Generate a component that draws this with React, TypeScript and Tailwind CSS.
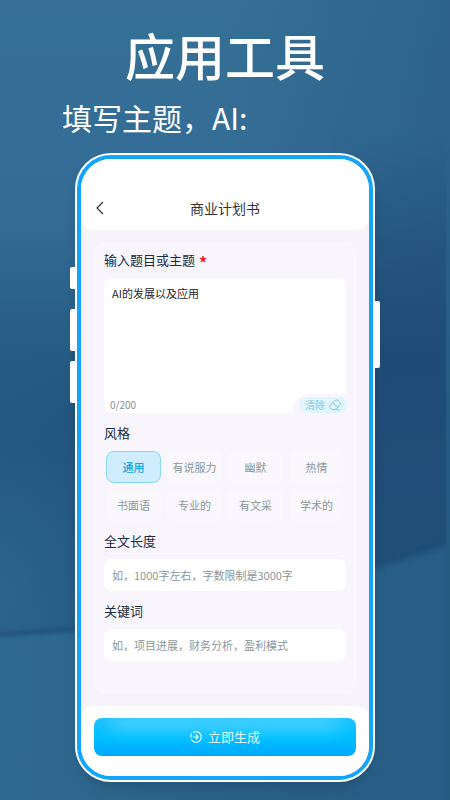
import { useState } from 'react';

const STYLES = ['通用', '有说服力', '幽默', '热情', '书面语', '专业的', '有文采', '学术的'];

const MAX_LENGTH = 200;

const Backdrop = () => (
  <svg
    className="absolute inset-0 h-full w-full"
    viewBox="0 0 450 800"
    preserveAspectRatio="none"
    aria-hidden="true"
  >
    <defs>
      <linearGradient id="wall" x1="0" y1="0" x2="0" y2="1">
        <stop offset="0" stopColor="#357096" />
        <stop offset="0.28" stopColor="#336b95" />
        <stop offset="0.42" stopColor="#285d85" />
        <stop offset="0.56" stopColor="#20517a" />
        <stop offset="0.8" stopColor="#25597f" />
      </linearGradient>
      <linearGradient id="side" x1="0" y1="0" x2="1" y2="0">
        <stop offset="0.5" stopColor="#1f4d76" stopOpacity="0" />
        <stop offset="1" stopColor="#1f4d76" stopOpacity="0.35" />
      </linearGradient>
      <radialGradient id="glow" cx="0" cy="0.74" r="0.32" gradientTransform="scale(1 1)">
        <stop offset="0" stopColor="#2d678e" stopOpacity="0.8" />
        <stop offset="1" stopColor="#2d678e" stopOpacity="0" />
      </radialGradient>
      <linearGradient id="right" x1="0" y1="0" x2="0" y2="1">
        <stop offset="0" stopColor="#1f4c76" stopOpacity="0" />
        <stop offset="0.5" stopColor="#1f4c76" />
        <stop offset="1" stopColor="#1f4f78" />
      </linearGradient>
      <linearGradient id="floor" x1="0" y1="0" x2="1" y2="0">
        <stop offset="0" stopColor="#2f6a90" />
        <stop offset="0.5" stopColor="#2a6189" />
        <stop offset="1" stopColor="#285d85" />
      </linearGradient>
      <filter id="soft">
        <feGaussianBlur stdDeviation="2" />
      </filter>
    </defs>
    <rect width="450" height="800" fill="url(#wall)" />
    <rect width="450" height="800" fill="url(#side)" />
    <rect width="450" height="800" fill="url(#glow)" />
    <path d="M330 130H446V545L330 588Z" fill="url(#right)" />
    <path d="M0 634L200 620L446 544V800H0Z" fill="url(#floor)" />
    <path
      d="M-5 635L200 621L446 545"
      fill="none"
      stroke="#1f4f77"
      strokeWidth="4"
      filter="url(#soft)"
    />
    <path d="M446 150H450V800H446Z" fill="#2a6087" opacity="0.6" />
  </svg>
);

const BackIcon = () => (
  <svg viewBox="0 0 8 14" className="h-3.5 w-2" fill="none" stroke="#333" strokeWidth="1.2">
    <path d="M7 1L1 7L7 13" />
  </svg>
);

const EraserIcon = () => (
  <svg
    viewBox="0 0 12 12"
    className="size-3"
    fill="none"
    stroke="#7cc3da"
    strokeWidth="0.9"
    strokeLinecap="round"
    strokeLinejoin="round"
  >
    <path d="M5.6 1.7Q7.2.2 9 1.3L10.8 3Q12 4.6 10.8 6L7.4 9.6Q5.6 11 3.4 10.6Q1.2 10 .8 8.4Q.6 7 1.6 6Z" />
    <path d="M4 3.6Q5 6.4 8.8 8M6.6 10.8H10.4" />
  </svg>
);

const GenerateIcon = () => (
  <svg
    viewBox="0 0 12 12"
    className="relative size-3"
    fill="none"
    stroke="currentColor"
    strokeWidth="1.2"
    strokeLinecap="round"
    strokeLinejoin="round"
  >
    <path d="M3.6 1.2A5.3 5.3 0 1 1 1.5 8.8M.7 6.4A5.3 5.3 0 0 1 1.6 3.1" />
    <path d="M3.4 6H8.2M6.2 4L8.2 6L6.2 8" />
  </svg>
);

type TextFieldProps = {
  id: string;
  label: string;
  placeholder: string;
};

const TextField = ({ id, label, placeholder }: TextFieldProps) => (
  <div className="flex flex-col gap-2">
    <label htmlFor={id} className="text-[13px] leading-5 text-[#1b2b3a]">
      {label}
    </label>
    <input
      id={id}
      type="text"
      placeholder={placeholder}
      className="h-8 w-full rounded-lg bg-white px-2 text-[11px] text-[#1b2b3a] outline-none placeholder:text-[#8c9799]"
    />
  </div>
);

const App = () => {
  const [topic, setTopic] = useState('AI的发展以及应用');
  const [touched, setTouched] = useState(false);
  const [style, setStyle] = useState('通用');

  return (
    <main className="relative flex min-h-screen flex-col items-center overflow-hidden bg-[#2a6189] pb-4 font-['Noto_Sans_CJK_SC',sans-serif]">
      <Backdrop />

      <h1 className="relative mt-[18px] text-[50px] leading-[72px] font-medium text-white">
        应用工具
      </h1>
      <p className="relative flex w-full pl-[62px] text-[30px] leading-[54px] text-white">
        填写主题，AI<span className="w-2 overflow-hidden">:</span>
      </p>

      <div className="relative mt-[9px] w-2/3">
        <span className="absolute top-[114px] -left-[5px] h-[22px] w-[5px] rounded-l-xs bg-white" />
        <span className="absolute top-[156px] -left-[5px] h-[42px] w-[5px] rounded-l-xs bg-white" />
        <span className="absolute top-[208px] -left-[5px] h-[42px] w-[5px] rounded-l-xs bg-white" />
        <span className="absolute top-[148px] -right-[5px] h-[67px] w-[5px] rounded-r-xs bg-white" />

        <div className="rounded-[36px] border-2 border-white bg-[#12a5fa] p-1 shadow-lg">
          <div className="overflow-hidden rounded-[30px] bg-[#f6f3fb]">
            <header className="grid grid-cols-[1fr_auto_1fr] items-center rounded-b-xl bg-white px-[15px] pt-[37px] pb-[10px]">
              <button type="button" aria-label="返回" className="justify-self-start">
                <BackIcon />
              </button>
              <h2 className="text-sm leading-6 text-[#333]">商业计划书</h2>
            </header>

            <form
              className="mx-[13px] mt-3 flex flex-col gap-[10px] rounded-xl border border-[#faf8fe] bg-[#f8f5fc] px-[9px] pt-[7px] pb-8"
              onSubmit={(e) => e.preventDefault()}
            >
              <div className="flex flex-col gap-2">
                <label
                  htmlFor="topic"
                  className="flex h-5 gap-1 text-[13px] leading-5 text-[#1b2b3a]"
                >
                  输入题目或主题
                  <span className="text-base leading-6 font-bold text-[#f01818]">*</span>
                </label>
                <div className="relative h-[135px] rounded-lg bg-white">
                  <textarea
                    id="topic"
                    value={topic}
                    maxLength={MAX_LENGTH}
                    onChange={(e) => {
                      setTopic(e.target.value);
                      setTouched(true);
                    }}
                    className="block h-28 w-full resize-none px-2 py-[7px] text-[11px] leading-4 text-[#1f2329] outline-none"
                  />
                  <span className="absolute bottom-0 left-1.5 text-[10px] leading-4 text-[#8b8f93]">
                    {touched ? topic.length : 0}/{MAX_LENGTH}
                  </span>
                  <div className="absolute -right-px bottom-0 rounded-tl-2xl bg-[#f8f5fc] pt-[3px] pl-1.5">
                    <button
                      type="button"
                      onClick={() => setTopic('')}
                      className="flex h-4 items-center gap-1 rounded-full bg-[#e2f4fd] px-1.5 text-[10px] leading-4 text-[#7fcbe3]"
                    >
                      清除
                      <EraserIcon />
                    </button>
                  </div>
                </div>
              </div>

              <fieldset>
                <legend className="text-[13px] leading-5 text-[#1b2b3a]">风格</legend>
                <div className="grid grid-cols-4 gap-1.5 px-0.5 pt-2">
                  {STYLES.map((name) => (
                    <button
                      key={name}
                      type="button"
                      aria-pressed={style === name}
                      onClick={() => setStyle(name)}
                      className={`h-8 rounded-lg border text-[11px] whitespace-nowrap ${
                        style === name
                          ? 'border-[#86d8f2] bg-[#d0edfe] font-medium text-[#10a5dc]'
                          : 'border-transparent bg-[#faf8fd] text-[#8c9799]'
                      }`}
                    >
                      {name}
                    </button>
                  ))}
                </div>
              </fieldset>

              <TextField id="length" label="全文长度" placeholder="如，1000字左右，字数限制是3000字" />
              <TextField id="keywords" label="关键词" placeholder="如，项目进展，财务分析，盈利模式" />
            </form>

            <footer className="mt-3 rounded-t-xl bg-white px-[13px] pt-3 pb-5">
              <button
                type="button"
                className="relative flex h-[38px] w-full items-center justify-center gap-1.5 overflow-hidden rounded-lg bg-linear-to-b from-[#1cc2ff] via-[#00c0ff] to-[#00a8ff] text-[13px] text-[#e2f8ff]"
              >
                <span className="absolute inset-x-4 -top-1 h-4 rounded-full bg-[#5cd8ff] opacity-70 blur-sm" />
                <GenerateIcon />
                <span className="relative">立即生成</span>
              </button>
            </footer>
          </div>
        </div>
      </div>
    </main>
  );
};

export default App;
